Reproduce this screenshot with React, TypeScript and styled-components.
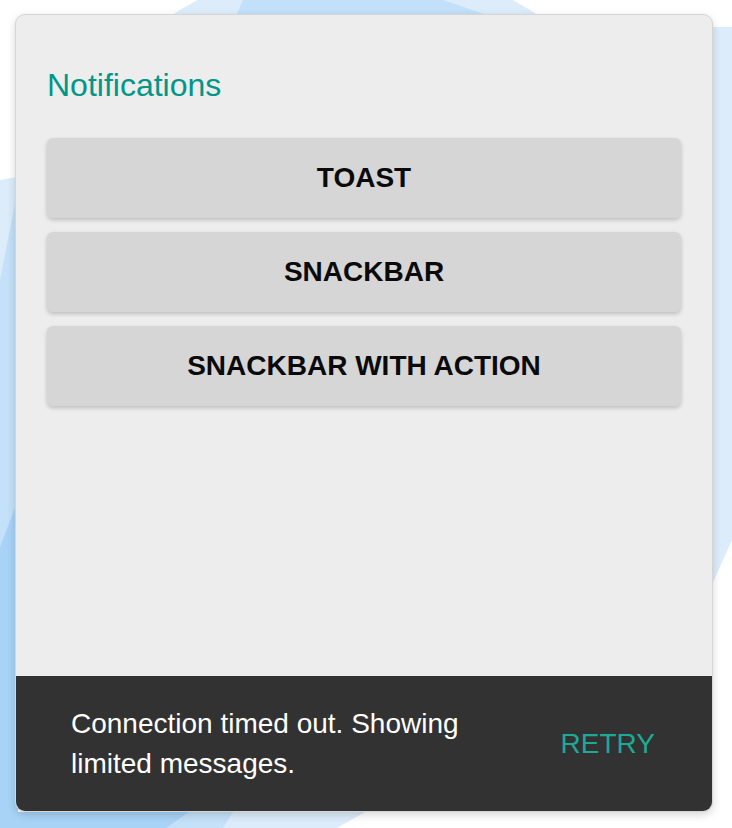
import React from "react";
import styled, { createGlobalStyle } from "styled-components";

const GlobalStyle = createGlobalStyle`
  html, body {
    margin: 0;
    padding: 0;
    background: #ffffff;
    font-family: "Liberation Sans", Arial, sans-serif;
  }
  * { box-sizing: border-box; }
`;

const Page = styled.div`
  position: relative;
  width: 732px;
  height: 828px;
  padding: 14px 19px 16px 15px;
  overflow: hidden;
`;

const Backdrop = styled.svg`
  position: absolute;
  inset: 0;
  width: 732px;
  height: 828px;
  z-index: 0;
`;

const Card = styled.section`
  position: relative;
  z-index: 1;
  height: 798px;
  display: flex;
  flex-direction: column;
  background: #ededed;
  border: 1px solid #d5d5d5;
  border-radius: 10px;
  overflow: hidden;
  box-shadow: 0 3px 9px rgba(0, 0, 0, 0.16);
`;

const Content = styled.div`
  display: flex;
  flex-direction: column;
  padding: 52px 31px 0;
`;

const Title = styled.h1`
  margin: 0 0 34px;
  font-size: 32px;
  font-weight: 400;
  line-height: normal;
  color: #009688;
`;

const ButtonList = styled.div`
  display: flex;
  flex-direction: column;
  gap: 14px;
`;

const ActionButton = styled.button`
  height: 80px;
  border: none;
  border-radius: 6px;
  background: #d6d6d6;
  color: #0a0a0a;
  font-family: "Liberation Sans", Arial, sans-serif;
  font-size: 28px;
  font-weight: 700;
  box-shadow: 0 2px 4px rgba(0, 0, 0, 0.2);
  cursor: pointer;
`;

const Snackbar = styled.div`
  margin-top: auto;
  display: flex;
  align-items: center;
  justify-content: space-between;
  background: #323232;
  padding: 28px 57px 27px 55px;
`;

const Message = styled.p`
  margin: 0;
  max-width: 420px;
  color: #ffffff;
  font-size: 28px;
  line-height: 40px;
`;

const SnackAction = styled.button`
  border: none;
  background: transparent;
  padding: 0;
  color: #1ea896;
  font-family: "Liberation Sans", Arial, sans-serif;
  font-size: 28px;
  line-height: 40px;
  cursor: pointer;
`;

export default function App() {
  return (
    <>
      <GlobalStyle />
      <Page>
        <Backdrop viewBox="0 0 732 828" aria-hidden="true">
          <circle cx="355" cy="298" r="337" fill="#ddecfb" />
          <path d="M0,180 L18,177 L18,812 L365,812 L337,828 L0,828 Z" fill="#ddecfb" />
          <path d="M705,27 L732,27 L732,540 L705,600 Z" fill="#ddecfb" />
          <path d="M243,0 L443,0 L490,16 L236,16 Z" fill="#c2e0f9" />
          <path d="M0,280 L18,188 L18,812 L233,812 L223,828 L0,828 Z" fill="#c4e1f9" />
          <path d="M0,547 L18,500 L18,812 L189,812 L166,828 L0,828 Z" fill="#a8d3f7" />
        </Backdrop>
        <Card>
          <Content>
            <Title>Notifications</Title>
            <ButtonList>
              <ActionButton>TOAST</ActionButton>
              <ActionButton>SNACKBAR</ActionButton>
              <ActionButton>SNACKBAR WITH ACTION</ActionButton>
            </ButtonList>
          </Content>
          <Snackbar>
            <Message>Connection timed out. Showing limited messages.</Message>
            <SnackAction>RETRY</SnackAction>
          </Snackbar>
        </Card>
      </Page>
    </>
  );
}
